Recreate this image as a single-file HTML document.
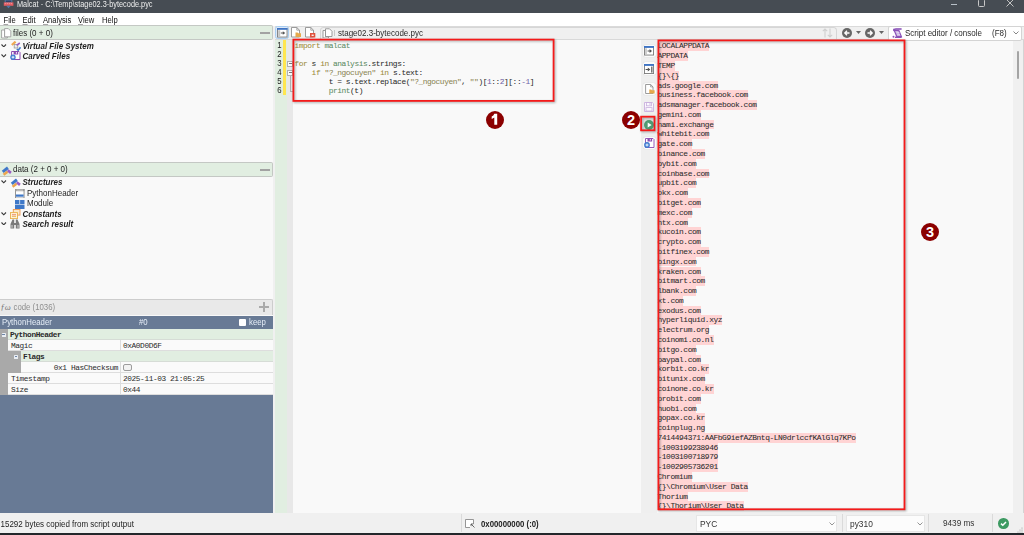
<!DOCTYPE html>
<html><head><meta charset="utf-8">
<style>
*{box-sizing:border-box;margin:0;padding:0}
html,body{width:1024px;height:535px;overflow:hidden;background:#f0f0f0;font-family:"Liberation Sans",sans-serif;color:#222}
.a{position:absolute}
.mono{font-family:"Liberation Mono",monospace}
#title{left:0;top:0;width:1024px;height:13px;background:#464c53;color:#eeeeee;font-size:7.35px;line-height:10px}
#menu{left:0;top:13px;width:1024px;height:13px;background:#fff;font-size:7.6px;line-height:13px;color:#111}
#menu u{text-decoration:underline;text-decoration-thickness:.5px;text-underline-offset:1.2px;text-decoration-color:#777}
#menu span{position:absolute;top:.6px;transform:scaleY(1.12);transform-origin:50% 55%}
#left{left:0;top:26px;width:273px;height:487px;background:#f9f9f9}
.hdr{position:absolute;left:0;width:273px;background:#e1eee1;border:1px solid #c4c8c4;border-left:none;border-radius:0 2px 2px 0;font-size:8px;color:#222}
.hdr .t{position:absolute;left:13px;top:.5px;transform:scaleY(1.12);transform-origin:50% 55%}
.tree{position:absolute;font-size:8px;color:#1e1e1e;white-space:nowrap}
.bi{font-weight:bold;font-style:italic}
.sy{transform:scaleY(1.2);transform-origin:50% 50%}
.sy2{transform:scaleY(1.12);transform-origin:50% 55%}
.chev{position:absolute;left:1px;width:5px;height:5px}
.ol{position:absolute;left:657.5px;height:9.787px;background:#ffd4d4;font-family:"Liberation Mono",monospace;font-size:7.9px;letter-spacing:-0.43px;line-height:9.787px;color:#2a2a2a;white-space:pre;overflow:visible;-webkit-text-stroke:0.04px #2a2a2a}
.code{position:absolute;left:294.5px;font-family:"Liberation Mono",monospace;font-size:7.9px;letter-spacing:-0.46px;line-height:9.15px;color:#2a2a2a;white-space:pre;-webkit-text-stroke:0.04px}
.kw{color:#9c8a3a}
.id{color:#5a8a62}
.st{color:#8a8452}
.num{color:#6e62a8}
.ln{position:absolute;left:276px;width:7px;font-size:7.8px;color:#222;text-align:center;line-height:9.15px;transform:scaleY(1.12)}
.redbox{position:absolute;border:2px solid #ee1c24;box-shadow:1.5px 1.5px 2.5px rgba(0,0,0,0.28)}
.badge{position:absolute;width:18px;height:18px;border-radius:50%;background:#8b0000;color:#fff;font-weight:bold;font-size:14.5px;line-height:19px;text-align:center}
.row{position:absolute;left:0;width:273px;height:11px;font-family:"Liberation Mono",monospace;font-size:7.8px;letter-spacing:-0.4px;line-height:12.5px;color:#2a2a2a}
.vbtn{position:absolute;left:642.5px;width:13px;height:12.5px;border-radius:2.5px;background:#fbfbfb;box-shadow:0 0 1px rgba(0,0,0,.2)}
.combo{position:absolute;background:#fcfcfc;border:1px solid #e6e6e6;font-size:8px;color:#333}
</style></head><body>

<!-- title bar -->
<div id="title" class="a">
  <svg class="a" style="left:3px;top:0" width="11" height="9" viewBox="0 0 11 9"><path d="M2.2 0 H8.8 V2.4 H2.2 Z" fill="#2f3a5e" stroke="#5b82ad" stroke-width=".9"/><rect x="0.8" y="2.4" width="9.6" height="3.4" fill="#e45c62"/><path d="M1.8 3.6 h1 M3.8 3.6 h1 M5.8 3.6 h1 M7.8 3.6 h1" stroke="#f4b4b4" stroke-width=".8"/><path d="M3.2 5.8 H7.8 L5.5 8.2 Z" fill="#4f78a8"/></svg>
  <span class="a sy2" style="left:17px;top:0">Malcat - C:\Temp\stage02.3-bytecode.pyc</span>
  <div class="a" style="left:950.5px;top:3.5px;width:6.5px;height:1px;background:#b8c0c8"></div>
  <div class="a" style="left:978px;top:-1px;width:6.5px;height:7.5px;border:1px solid #c8c8c8;border-radius:1.5px"></div>
  <svg class="a" style="left:1005.5px;top:-1px" width="8" height="8" viewBox="0 0 8 8"><path d="M.5 .5 L7.5 7.5 M7.5 .5 L.5 7.5" stroke="#cfcfcf" stroke-width=".9"/></svg>
</div>

<!-- menu -->
<div id="menu" class="a">
  <span style="left:3.5px"><u>F</u>ile</span>
  <span style="left:22.5px"><u>E</u>dit</span>
  <span style="left:43px"><u>A</u>nalysis</span>
  <span style="left:78px"><u>V</u>iew</span>
  <span style="left:102px">Help</span>
</div>

<!-- left panel -->
<div id="left" class="a"></div>
<div class="hdr" style="top:25px;height:15px;line-height:14px">
  <svg class="a" style="left:1px;top:1.5px" width="11" height="11" viewBox="0 0 11 11"><path d="M.6 2 H3.6 V8.8 H6.4 V10 H.6 Z" fill="#fff" stroke="#9a9a9a" stroke-width=".85"/><path d="M3.6 .6 H7.3 L9.8 3.1 V8.8 H3.6 Z" fill="#fff" stroke="#9a9a9a" stroke-width=".85"/></svg>
  <span class="t">files (0 + 0)</span>
  <div class="a" style="left:260px;top:5.5px;width:10px;height:2px;background:#a2a2a2"></div>
</div>
<div class="tree" style="left:0;top:41px;width:273px;height:11px;line-height:10px">
  <svg class="a" style="left:1px;top:2.5px" width="5.5" height="3.5" viewBox="0 0 5.5 3.5"><path d="M.5 .5 L2.75 2.8 L5 .5" stroke="#3a3a3a" fill="none" stroke-width="1.1"/></svg>
  <svg class="a" style="left:10.5px;top:-.5px" width="10" height="10" viewBox="0 0 10 10"><path d="M.8 4 L4.6 .6" stroke="#f0a850" stroke-width="2.2"/><rect x="3.2" y="3.4" width="3.6" height="3.6" fill="#eee" stroke="#9a9a9a" stroke-width=".8"/><path d="M5.6 4.4 L8.8 2" stroke="#9a5ec4" stroke-width="1.6"/><path d="M5.8 8 L7.2 9.3 L9.5 6.3" stroke="#3f78c8" stroke-width="1.5" fill="none"/></svg>
  <span class="a bi sy" style="left:22.5px;top:.5px">Virtual File System</span>
</div>
<div class="tree" style="left:0;top:51px;width:273px;height:11px;line-height:10px">
  <svg class="a" style="left:1px;top:3px" width="5.5" height="3.5" viewBox="0 0 5.5 3.5"><path d="M.5 .5 L2.75 2.8 L5 .5" stroke="#3a3a3a" fill="none" stroke-width="1.1"/></svg>
  <svg class="a" style="left:10px;top:0" width="10.5" height="9" viewBox="0 0 10.5 9"><path d="M1.6 .5 H9 L10 1.5 V8.5 H1.6 Z" fill="#fff" stroke="#8a4ab0" stroke-width="1"/><rect x="3.6" y=".5" width="4.6" height="3" fill="#8a4ab0"/><rect x="5.9" y="1" width=".9" height="1.7" fill="#fff"/><circle cx="3" cy="6.2" r="2.7" fill="#3f7ad0"/><path d="M1.6 6.2 h2.8 M3 4.8 v2.8" stroke="#fff" stroke-width=".9"/></svg>
  <span class="a bi sy" style="left:22.5px;top:.5px">Carved Files</span>
</div>

<div class="hdr" style="top:162px;height:15px;line-height:13px">
  <svg class="a" style="left:0.5px;top:2px" width="11" height="11" viewBox="0 0 11 11"><rect x="1" y="3.3" width="6.6" height="3" fill="#3f78c8" transform="rotate(-38 4.3 4.8)"/><rect x="6.2" y="5.3" width="4.2" height="2.6" fill="#9a5ec4" transform="rotate(38 8.3 6.6)"/><rect x="2" y="7" width="5" height="2.5" fill="#eda54e" transform="rotate(-38 4.5 8.2)"/></svg>
  <span class="t" style="top:0">data (2 + 0 + 0)</span>
  <div class="a" style="left:260px;top:5.5px;width:10px;height:2px;background:#a2a2a2"></div>
</div>
<div class="tree" style="left:0;top:177.5px;width:273px;height:11px;line-height:10px">
  <svg class="a" style="left:1px;top:2.5px" width="5.5" height="3.5" viewBox="0 0 5.5 3.5"><path d="M.5 .5 L2.75 2.8 L5 .5" stroke="#3a3a3a" fill="none" stroke-width="1.1"/></svg>
  <svg class="a" style="left:10px;top:-0.5px" width="11" height="11" viewBox="0 0 11 11"><rect x="1" y="3.3" width="6.6" height="3" fill="#3f78c8" transform="rotate(-38 4.3 4.8)"/><rect x="6.2" y="5.3" width="4.2" height="2.6" fill="#9a5ec4" transform="rotate(38 8.3 6.6)"/><rect x="2" y="7" width="5" height="2.5" fill="#eda54e" transform="rotate(-38 4.5 8.2)"/></svg>
  <span class="a bi sy" style="left:22.5px;top:.5px">Structures</span>
</div>
<div class="tree" style="left:0;top:188px;width:273px;height:11px;line-height:10px">
  <svg class="a" style="left:15px;top:.5px" width="9.5" height="9.5" viewBox="0 0 9.5 9.5"><rect x=".45" y=".45" width="8.6" height="8.6" fill="#fff" stroke="#8a8a8a" stroke-width=".9"/><rect x="0" y="0" width="9.5" height="2.2" fill="#9a9a9a"/><rect x="1.5" y=".7" width="6.5" height=".8" fill="#ddd"/><rect x=".9" y="5.5" width="7.7" height="2.2" fill="#3f78c8"/></svg>
  <span class="a sy" style="left:27px;top:.5px">PythonHeader</span>
</div>
<div class="tree" style="left:0;top:198.5px;width:273px;height:11px;line-height:10px">
  <svg class="a" style="left:15px;top:1px" width="9.5" height="9" viewBox="0 0 9.5 9"><rect x="0" y="0" width="4.4" height="4" fill="#3f78c8"/><rect x="5.1" y="0" width="4.4" height="4" fill="#3f78c8"/><rect x="0" y="4.6" width="9.5" height="4.4" fill="#3f78c8"/></svg>
  <span class="a sy" style="left:27px;top:.5px">Module</span>
</div>
<div class="tree" style="left:0;top:209px;width:273px;height:11px;line-height:10px">
  <svg class="a" style="left:1px;top:3px" width="5.5" height="3.5" viewBox="0 0 5.5 3.5"><path d="M.5 .5 L2.75 2.8 L5 .5" stroke="#3a3a3a" fill="none" stroke-width="1.1"/></svg>
  <svg class="a" style="left:10px;top:0" width="10.5" height="10" viewBox="0 0 10.5 10"><rect x="3.3" y=".5" width="6.7" height="5.6" fill="#fbe9cc" stroke="#f09a50" stroke-width=".9"/><rect x=".5" y="3.6" width="7" height="6" fill="#fff2d8" stroke="#e8b04a" stroke-width=".9"/><rect x="2" y="5.3" width="4" height="1" fill="#e88060"/><rect x="2" y="7" width="4" height="1" fill="#e8c070"/></svg>
  <span class="a bi sy" style="left:22.5px;top:.5px">Constants</span>
</div>
<div class="tree" style="left:0;top:219px;width:273px;height:11px;line-height:10px">
  <svg class="a" style="left:1px;top:2.5px" width="5.5" height="3.5" viewBox="0 0 5.5 3.5"><path d="M.5 .5 L2.75 2.8 L5 .5" stroke="#3a3a3a" fill="none" stroke-width="1.1"/></svg>
  <svg class="a" style="left:10px;top:-.5px" width="10" height="10" viewBox="0 0 10 10"><path d="M2.5 .5 H4.2 V4 H5.8 V.5 H7.5 L9.5 5 V9.5 H5.8 V6 H4.2 V9.5 H.5 V5 Z" fill="#7a7a7a"/><rect x="1.3" y="6" width="1.4" height="2.8" fill="#bbb"/><rect x="7.3" y="6" width="1.4" height="2.8" fill="#bbb"/></svg>
  <span class="a bi sy" style="left:22.5px;top:.5px">Search result</span>
</div>

<!-- code header -->
<div class="a" style="left:0;top:299px;width:273px;height:16px;background:#e9e9e9;border:1px solid #cdcdcd;border-left:none;border-bottom:none;border-radius:0 2px 0 0;font-size:7.8px;color:#8e8e8e;line-height:15px">
  <span class="a" style="left:0.5px;top:0;font-style:italic;font-family:'Liberation Serif',serif;font-size:8.5px;color:#777">&#402;&#969;</span>
  <span class="a sy2" style="left:13.5px;top:0">code (1036)</span>
  <div class="a" style="left:259px;top:6px;width:10px;height:2px;background:#aaa"></div>
  <div class="a" style="left:263px;top:2px;width:2px;height:10px;background:#aaa"></div>
</div>
<div class="a" style="left:0;top:316px;width:273px;height:197px;background:#687a95"></div>
<div class="a" style="left:0;top:316px;width:273px;height:13px;font-size:7.8px;line-height:13px;color:#e6eef8">
  <span class="a sy2" style="left:2px">PythonHeader</span>
  <span class="a sy2" style="left:139px">#0</span>
  <div class="a" style="left:239px;top:3px;width:7px;height:7px;background:#fff;border-radius:1px"></div>
  <span class="a sy2" style="left:249px">keep</span>
</div>
<!-- table -->
<div class="a" style="left:0;top:329px;width:8px;height:66px;background:#a9a9a9"></div>
<div class="row" style="top:329px;background:#e1eee1;left:8px;width:265px;border-bottom:1px solid #d6dcd6"><b style="position:absolute;left:2px">PythonHeader</b></div>
<div class="a" style="left:1.5px;top:332.5px;width:4px;height:4px;background:#e9edf3;border-radius:.5px"></div><div class="a" style="left:2.2px;top:334.2px;width:2.6px;height:.8px;background:#6f86a8"></div>
<div class="row" style="top:340px;background:#fafafa;left:8px;width:265px;border-bottom:1px solid #ddd"><span style="position:absolute;left:3px">Magic</span><span style="position:absolute;left:112px;top:0;height:11px;border-left:1px solid #ddd"></span><span style="position:absolute;left:115px">0xA0D0D6F</span></div>
<div class="a" style="left:8px;top:351px;width:13px;height:22px;background:#a9a9a9"></div>
<div class="row" style="top:351px;background:#e1eee1;left:21px;width:252px;border-bottom:1px solid #d6dcd6"><b style="position:absolute;left:2px">Flags</b></div>
<div class="a" style="left:14px;top:354.5px;width:4px;height:4px;background:#e9edf3;border-radius:.5px"></div><div class="a" style="left:14.7px;top:356.2px;width:2.6px;height:.8px;background:#6f86a8"></div>
<div class="row" style="top:362px;background:#fafafa;left:21px;width:252px;border-bottom:1px solid #ddd"><span style="position:absolute;right:155px">0x1 HasChecksum</span><span style="position:absolute;left:99px;top:0;height:11px;border-left:1px solid #ddd"></span><span style="position:absolute;left:102.2px;top:1.6px;width:8.4px;height:7.8px;border:1px solid #9c9c9c;border-radius:2px;background:#f2f2f2"></span></div>
<div class="row" style="top:373px;background:#fafafa;left:8px;width:265px;border-bottom:1px solid #ddd"><span style="position:absolute;left:3px">Timestamp</span><span style="position:absolute;left:112px;top:0;height:11px;border-left:1px solid #ddd"></span><span style="position:absolute;left:115px">2025-11-03 21:05:25</span></div>
<div class="row" style="top:384px;background:#fafafa;left:8px;width:265px;border-bottom:1px solid #ddd"><span style="position:absolute;left:3px">Size</span><span style="position:absolute;left:112px;top:0;height:11px;border-left:1px solid #ddd"></span><span style="position:absolute;left:115px">0x44</span></div>

<!-- splitter -->
<div class="a" style="left:273px;top:26px;width:2px;height:487px;background:#f0f0f0"></div>

<!-- editor toolbar -->
<div class="a" style="left:275px;top:26px;width:749px;height:13px;background:#f0f0f0;border-top:1px solid #dadada"></div>

<!-- editor code area -->
<div class="a" style="left:275px;top:40px;width:366px;height:473px;background:#f9f9f9"></div>
<div class="a" style="left:275px;top:40px;width:12px;height:473px;background:#e1eee1"></div>
<div class="a" style="left:287px;top:40px;width:6px;height:473px;background:#e8e8e8"></div>
<div class="a" style="left:283px;top:40px;width:3px;height:55px;background:#ffe650"></div>

<!-- vertical toolbar -->
<div class="a" style="left:641px;top:40px;width:16px;height:473px;background:#efefef"></div>
<!-- output area -->
<div class="a" style="left:657px;top:40px;width:356px;height:473px;background:#f9f9f9"></div>
<div class="a" style="left:1013px;top:39px;width:11px;height:474px;background:#f0f0f0"></div>
<div class="a" style="left:1022.5px;top:39px;width:1.5px;height:474px;background:#d4d4d4"></div>
<div class="a" style="left:1017px;top:51px;width:2px;height:28px;background:#a4a4a4;border-radius:1px"></div>

<div class="ol" style="top:41.40px;width:51.72px">LOCALAPPDATA</div>
<div class="ol" style="top:51.19px;width:30.17px">APPDATA</div>
<div class="ol" style="top:60.97px;width:17.24px">TEMP</div>
<div class="ol" style="top:70.76px;width:21.55px">{}\{}</div>
<div class="ol" style="top:80.55px;width:60.34px">ads.google.com</div>
<div class="ol" style="top:90.34px;width:90.51px">business.facebook.com</div>
<div class="ol" style="top:100.12px;width:99.13px">adsmanager.facebook.com</div>
<div class="ol" style="top:109.91px;width:43.10px">gemini.com</div>
<div class="ol" style="top:119.70px;width:56.03px">nami.exchange</div>
<div class="ol" style="top:129.48px;width:51.72px">whitebit.com</div>
<div class="ol" style="top:139.27px;width:34.48px">gate.com</div>
<div class="ol" style="top:149.06px;width:47.41px">binance.com</div>
<div class="ol" style="top:158.84px;width:38.79px">bybit.com</div>
<div class="ol" style="top:168.63px;width:51.72px">coinbase.com</div>
<div class="ol" style="top:178.42px;width:38.79px">upbit.com</div>
<div class="ol" style="top:188.21px;width:30.17px">okx.com</div>
<div class="ol" style="top:197.99px;width:43.10px">bitget.com</div>
<div class="ol" style="top:207.78px;width:34.48px">mexc.com</div>
<div class="ol" style="top:217.57px;width:30.17px">htx.com</div>
<div class="ol" style="top:227.35px;width:43.10px">kucoin.com</div>
<div class="ol" style="top:237.14px;width:43.10px">crypto.com</div>
<div class="ol" style="top:246.93px;width:51.72px">bitfinex.com</div>
<div class="ol" style="top:256.71px;width:38.79px">bingx.com</div>
<div class="ol" style="top:266.50px;width:43.10px">kraken.com</div>
<div class="ol" style="top:276.29px;width:47.41px">bitmart.com</div>
<div class="ol" style="top:286.07px;width:38.79px">lbank.com</div>
<div class="ol" style="top:295.86px;width:25.86px">xt.com</div>
<div class="ol" style="top:305.65px;width:43.10px">exodus.com</div>
<div class="ol" style="top:315.44px;width:64.65px">hyperliquid.xyz</div>
<div class="ol" style="top:325.22px;width:51.72px">electrum.org</div>
<div class="ol" style="top:335.01px;width:56.03px">coinomi.co.nl</div>
<div class="ol" style="top:344.80px;width:38.79px">bitgo.com</div>
<div class="ol" style="top:354.58px;width:43.10px">paypal.com</div>
<div class="ol" style="top:364.37px;width:51.72px">korbit.co.kr</div>
<div class="ol" style="top:374.16px;width:47.41px">bitunix.com</div>
<div class="ol" style="top:383.94px;width:56.03px">coinone.co.kr</div>
<div class="ol" style="top:393.73px;width:43.10px">probit.com</div>
<div class="ol" style="top:403.52px;width:38.79px">huobi.com</div>
<div class="ol" style="top:413.31px;width:47.41px">gopax.co.kr</div>
<div class="ol" style="top:423.09px;width:47.41px">coinplug.ng</div>
<div class="ol" style="top:432.88px;width:198.26px">7414494371:AAFbG9iefAZBntq-LN0drlccfKAlGlq7KPo</div>
<div class="ol" style="top:442.67px;width:60.34px">-1003199238946</div>
<div class="ol" style="top:452.45px;width:60.34px">-1003100718979</div>
<div class="ol" style="top:462.24px;width:60.34px">-1002905736201</div>
<div class="ol" style="top:472.03px;width:34.48px">Chromium</div>
<div class="ol" style="top:481.81px;width:90.51px">{}\Chromium\User Data</div>
<div class="ol" style="top:491.60px;width:30.17px">Thorium</div>
<div class="ol" style="top:501.39px;width:86.20px">{}\Thorium\User Data</div>


<!-- line numbers -->
<div class="ln" style="top:40.7px">1</div>
<div class="ln" style="top:49.85px">2</div>
<div class="ln" style="top:59px">3</div>
<div class="ln" style="top:68.15px">4</div>
<div class="ln" style="top:77.3px">5</div>
<div class="ln" style="top:86.45px">6</div>
<!-- fold markers -->
<div class="a" style="left:287px;top:60.5px;width:6px;height:6px;border:1px solid #b0b0b0;background:#fafafa"></div>
<div class="a" style="left:288.5px;top:63px;width:3px;height:1px;background:#777"></div>
<div class="a" style="left:287px;top:69.5px;width:6px;height:6px;border:1px solid #b0b0b0;background:#fafafa"></div>
<div class="a" style="left:288.5px;top:72px;width:3px;height:1px;background:#777"></div>
<div class="a" style="left:289.5px;top:75.5px;width:1px;height:15px;background:#b0b0b0"></div>
<div class="a" style="left:289.5px;top:90.5px;width:3px;height:1px;background:#b0b0b0"></div>
<!-- code -->
<div class="code" style="top:40.7px"><span class="kw">import</span> <span class="id">malcat</span>

<span class="kw">for</span> s <span class="kw">in</span> <span class="id">analysis</span>.strings:
    <span class="kw">if</span> <span class="st">"?_ngocuyen"</span> <span class="kw">in</span> s.text:
        t = s.text.replace(<span class="st">"?_ngocuyen"</span>, <span class="st">""</span>)[<span class="num">1</span>::<span class="num">2</span>][::<span class="num">-1</span>]
        <span class="id">print</span>(t)</div>

<!-- editor toolbar contents -->
<div class="a" style="left:275px;top:25.5px;width:13.5px;height:13px;border:1px solid #a9cdf0;background:#dce9f8;border-radius:2.5px"></div>
<svg class="a" style="left:277px;top:28px" width="10.5" height="9.5" viewBox="0 0 10.5 9.5"><rect x=".45" y=".45" width="9.6" height="8.6" fill="#fff" stroke="#7a7a7a" stroke-width=".9"/><rect x="0" y="0" width="10.5" height="1.8" fill="#3f74c4"/><rect x="1.2" y="2.2" width="2" height="6.3" fill="#c4c4c4"/><path d="M3.8 4.6 H5.8 V3.2 L8.3 5 L5.8 6.8 V5.4 H3.8 Z" fill="#555"/></svg>
<svg class="a" style="left:291px;top:27px" width="10.5" height="10.5" viewBox="0 0 10.5 10.5"><path d="M.5 .5 H5.8 L8.5 3.2 V10 H.5 Z" fill="#fff" stroke="#8a8a8a" stroke-width=".85"/><path d="M5.8 .5 V3.2 H8.5" fill="none" stroke="#8a8a8a" stroke-width=".7"/><path d="M4.5 5.6 H6.6 L7.2 6.3 H10 V10 H4.5 Z" fill="#e6a94c"/></svg>
<svg class="a" style="left:305px;top:27px" width="11" height="11" viewBox="0 0 11 11"><path d="M.5 .5 H5.8 L8.5 3.2 V10 H.5 Z" fill="#fff" stroke="#8a8a8a" stroke-width=".85"/><path d="M5.8 .5 V3.2 H8.5" fill="none" stroke="#8a8a8a" stroke-width=".7"/><rect x="5" y="6" width="5.3" height="4.5" fill="#e0503c"/><rect x="6.6" y="7.6" width="2.1" height="1.3" fill="#fff"/></svg>
<div class="a" style="left:319.5px;top:26.5px;width:517px;height:13px;border:1px solid #d6d6d6;border-bottom:none;border-radius:3.5px 3.5px 0 0;background:#f0f0f0"></div>
<div class="a" style="left:275px;top:39px;width:749px;height:1px;background:#d9d9d9"></div>
<svg class="a" style="left:321.5px;top:27.5px" width="11" height="10.5" viewBox="0 0 11 10.5"><path d="M1 2.5 H3.5 V8.5 H6.5 V10 H1 Z" fill="#fff" stroke="#8a8a8a" stroke-width=".85"/><path d="M3.5 .8 H7.5 L10 3.3 V8.5 H3.5 Z" fill="#fff" stroke="#8a8a8a" stroke-width=".85"/></svg>
<div class="a" style="left:334px;top:29.5px;width:1px;height:6.5px;background:#c8c8c8"></div>
<span class="a sy2" style="left:338px;top:27.6px;font-size:8px;line-height:12px;color:#2a2a2a">stage02.3-bytecode.pyc</span>
<svg class="a" style="left:822px;top:28px" width="11" height="10" viewBox="0 0 11 10"><path d="M3 9.5 V1 M.8 3.2 L3 1 L5.2 3.2 M8 .5 V9 M5.8 6.8 L8 9 L10.2 6.8" stroke="#d0d0d0" stroke-width="1.1" fill="none"/></svg>
<div class="a" style="left:842px;top:28px;width:10px;height:10px;border-radius:50%;background:#666"></div>
<svg class="a" style="left:843px;top:29px" width="8" height="8" viewBox="0 0 8 8"><path d="M6.5 4 H1.8 M4 1.8 L1.8 4 L4 6.2" stroke="#fff" stroke-width="1.3" fill="none"/></svg>
<svg class="a" style="left:856px;top:31px" width="5" height="3" viewBox="0 0 5 3"><path d="M0 0 H5 L2.5 3 Z" fill="#666"/></svg>
<div class="a" style="left:865px;top:28px;width:10px;height:10px;border-radius:50%;background:#666"></div>
<svg class="a" style="left:866px;top:29px" width="8" height="8" viewBox="0 0 8 8"><path d="M1.5 4 H6.2 M4 1.8 L6.2 4 L4 6.2" stroke="#fff" stroke-width="1.3" fill="none"/></svg>
<svg class="a" style="left:879px;top:31px" width="5" height="3" viewBox="0 0 5 3"><path d="M0 0 H5 L2.5 3 Z" fill="#666"/></svg>
<div class="a" style="left:888px;top:26px;width:134px;height:15px;border:1px solid #d4d4d4;background:#fff;border-radius:2px"></div>
<svg class="a" style="left:892px;top:27.8px" width="10.5" height="10.5" viewBox="0 0 10.5 10.5"><path d="M2.2 2.4 L6.8 2.4 L9.4 8.6 L4.8 8.6 Z" fill="#cbb6e2" stroke="#8a52b8" stroke-width="1.2"/><path d="M3.2 1 H9.6" stroke="#8a52b8" stroke-width="1.6"/><circle cx="2.4" cy="2" r="1.4" fill="#8a52b8"/><path d="M3 9.4 H9.6" stroke="#8a52b8" stroke-width="1.6"/><circle cx="1.5" cy="8.8" r="1" fill="#8a52b8"/><path d="M4.5 4.5 L7.5 4.5 M5.2 6.3 L8 6.3" stroke="#f0e8f8" stroke-width=".6"/></svg>
<span class="a sy2" style="left:905px;top:26.5px;font-size:8px;line-height:14px;color:#2a2a2a">Script editor / console</span>
<span class="a sy2" style="left:992px;top:26.5px;font-size:8px;line-height:14px;color:#2a2a2a">(F8)</span>
<svg class="a" style="left:1013px;top:31px" width="6" height="4" viewBox="0 0 6 4"><path d="M.5 .5 L3 3 L5.5 .5" stroke="#777" fill="none" stroke-width=".9"/></svg>

<!-- vertical toolbar icons -->
<div class="vbtn" style="top:44.5px"></div>
<svg class="a" style="left:644px;top:46px" width="10" height="9.5" viewBox="0 0 10 9.5"><rect x=".45" y=".45" width="9.1" height="8.6" fill="#fff" stroke="#7a7a7a" stroke-width=".9"/><rect x="0" y="0" width="10" height="1.9" fill="#3f74c4"/><rect x="1.2" y="2.2" width="1.6" height="6.2" fill="#c4c4c4"/><path d="M3.6 4.5 H5.6 V3.1 L8 5 L5.6 6.9 V5.5 H3.6 Z" fill="#505050"/></svg>
<div class="vbtn" style="top:62px"></div>
<svg class="a" style="left:644px;top:63.5px" width="10" height="10" viewBox="0 0 10 10"><rect x=".45" y=".45" width="9.1" height="9.1" fill="#fff" stroke="#7a7a7a" stroke-width=".9"/><rect x="0" y="0" width="10" height="1.9" fill="#3f74c4"/><rect x="7.1" y="2.6" width="1.4" height="6" fill="#6a6a6a"/><path d="M1.6 5 H3.8 V3.4 L6.3 5.5 L3.8 7.6 V6 H1.6 Z" fill="#505050"/></svg>
<div class="vbtn" style="top:82.5px"></div>
<svg class="a" style="left:644.5px;top:84px" width="10" height="10" viewBox="0 0 10 10"><path d="M.6 .5 H5.6 L8 2.9 V9.5 H.6 Z" fill="#fff" stroke="#8a8a8a" stroke-width=".85"/><path d="M5.6 .5 V2.9 H8" fill="none" stroke="#8a8a8a" stroke-width=".7"/><path d="M4.3 5.6 H6.3 L6.9 6.3 H9.6 V9.6 H4.3 Z" fill="#e6a94c"/></svg>
<svg class="a" style="left:644px;top:102px" width="10" height="10" viewBox="0 0 10 10"><path d="M.5 .5 H8.3 L9.5 1.7 V9.5 H.5 Z" fill="#fbf8fd" stroke="#c9b0de" stroke-width=".9"/><rect x="2.4" y=".6" width="5" height="3.2" fill="none" stroke="#c9b0de" stroke-width=".8"/><rect x="5.5" y="1.2" width="1" height="1.6" fill="#c9b0de"/><rect x="2" y="5.6" width="6" height="3.4" fill="none" stroke="#c9b0de" stroke-width=".8"/></svg>
<div class="a" style="left:641.5px;top:117.5px;width:13px;height:13px;background:#e2e2e2"></div>
<div class="a" style="left:644px;top:120px;width:10px;height:10px;border-radius:50%;background:#4f9a72"></div>
<svg class="a" style="left:644px;top:120px" width="10" height="10" viewBox="0 0 10 10"><path d="M3.7 2.6 L7.6 5 L3.7 7.4 Z" fill="#fff"/></svg>
<div class="vbtn" style="top:136.5px"></div>
<svg class="a" style="left:644px;top:138px" width="10.5" height="10" viewBox="0 0 10.5 10"><path d="M1.5 .5 H9 L10 1.5 V9.5 H1.5 Z" fill="#fff" stroke="#8a4ab0" stroke-width=".9"/><rect x="3.5" y=".5" width="4.6" height="3" fill="#8a4ab0"/><rect x="5.8" y="1" width=".9" height="1.6" fill="#fff"/><circle cx="3" cy="7" r="2.9" fill="#3f7ad0"/><path d="M1.5 7 h3 M3 5.5 v3" stroke="#fff" stroke-width=".9"/></svg>

<!-- red boxes -->
<svg class="a" style="left:0;top:0;filter:drop-shadow(1.2px 1.4px 1.1px rgba(60,70,70,.45))" width="1024" height="535" viewBox="0 0 1024 535">
<g fill="none" stroke="#f41a1a" stroke-width="1.8">
<rect x="293.4" y="39.6" width="260.2" height="61.3"/>
<rect x="658.4" y="40.4" width="246.1" height="468.9"/>
<rect x="641.1" y="116.7" width="13.4" height="13.6"/>
</g></svg>
<div class="badge" style="left:486px;top:111px"><svg style="position:absolute;left:0;top:0" width="18" height="18" viewBox="0 0 18 18"><path d="M8.3 2.8 H11.2 V13.7 H8.3 V6.6 Q7.2 7.5 5.7 7.9 V5.6 Q7.6 4.8 8.3 2.8 Z" fill="#fff"/></svg></div>
<div class="badge" style="left:622px;top:111px">2</div>
<div class="badge" style="left:921px;top:223px">3</div>

<!-- status bar -->
<div class="a" style="left:0;top:513px;width:1024px;height:20px;background:#f0f0f0"></div>
<div class="a" style="left:0;top:532.5px;width:1024px;height:3px;background:#23272b"></div>
<span class="a sy2" style="left:.5px;top:518.7px;font-size:8px;line-height:11px;color:#222">15292 bytes copied from script output</span>
<div class="a" style="left:461px;top:514px;width:1px;height:18px;background:#dadada"></div>
<svg class="a" style="left:465px;top:519px" width="10" height="9" viewBox="0 0 10 9"><path d="M8.5 5 V.5 H.5 V8.5 H5" fill="#fff" stroke="#8a8a8a" stroke-width=".9"/><path d="M6 5 L9.5 8.5 M6 5 h2.2 M6 5 v2.2" stroke="#555" stroke-width=".9" fill="none"/></svg>
<span class="a sy2" style="left:481px;top:518.5px;font-size:7.8px;line-height:11px;color:#222;font-weight:bold">0x00000000 (:0)</span>
<div class="combo" style="left:696px;top:515px;width:141px;height:17px"><span class="a sy2" style="left:3px;top:2px;font-size:8.4px;line-height:12px">PYC</span>
<svg class="a" style="left:132px;top:6px" width="6" height="4" viewBox="0 0 6 4"><path d="M.5 .5 L3 3 L5.5 .5" stroke="#888" fill="none" stroke-width=".9"/></svg></div>
<div class="a" style="left:842px;top:514px;width:1px;height:18px;background:#dadada"></div>
<div class="combo" style="left:846px;top:515px;width:79px;height:17px"><span class="a sy2" style="left:3px;top:2px;font-size:8.4px;line-height:12px">py310</span>
<svg class="a" style="left:70px;top:6px" width="6" height="4" viewBox="0 0 6 4"><path d="M.5 .5 L3 3 L5.5 .5" stroke="#888" fill="none" stroke-width=".9"/></svg></div>
<div class="a" style="left:928px;top:514px;width:1px;height:18px;background:#dadada"></div>
<span class="a sy2" style="left:943px;top:518px;font-size:8.2px;line-height:11px;color:#333">9439 ms</span>
<div class="a" style="left:992px;top:514px;width:1px;height:18px;background:#dadada"></div>
<div class="a" style="left:998px;top:518px;width:10.5px;height:10.5px;border-radius:50%;background:#3d9a62"></div>
<svg class="a" style="left:998px;top:518px" width="11" height="11" viewBox="0 0 11 11"><path d="M3 5.6 L4.8 7.3 L8 4" stroke="#fff" stroke-width="1.5" fill="none"/></svg>
<svg class="a" style="left:1017px;top:527px" width="6" height="6" viewBox="0 0 6 6"><circle cx="5" cy="1" r=".6" fill="#999"/><circle cx="5" cy="3" r=".6" fill="#999"/><circle cx="3" cy="3" r=".6" fill="#999"/><circle cx="5" cy="5" r=".6" fill="#999"/><circle cx="3" cy="5" r=".6" fill="#999"/><circle cx="1" cy="5" r=".6" fill="#999"/></svg>

</body></html>
